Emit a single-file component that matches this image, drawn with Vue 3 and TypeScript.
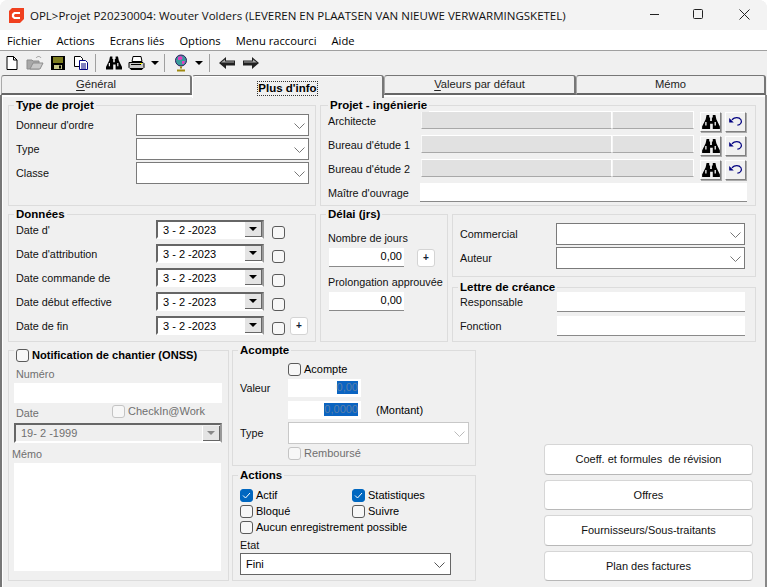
<template>
  <div class="window">
    <!-- barre de titre -->
    <div class="titlebar">
      <svg class="logo" width="17" height="17" viewBox="0 0 17 17">
        <path d="M4 1h12v11l-4 4H1V4z" fill="#f0401f" />
        <path d="M12 6H6.500L5 7.500v2L6.500 11H12" fill="none" stroke="#fff" stroke-width="2.200" />
      </svg>
      <span class="title">OPL&gt;Projet P20230004: Wouter Volders (LEVEREN EN PLAATSEN VAN NIEUWE VERWARMINGSKETEL)</span>
      <div class="win-controls">
        <svg width="46" height="30" viewBox="0 0 46 30"><path d="M21 14.500h9" stroke="#222" /></svg>
        <svg width="46" height="30" viewBox="0 0 46 30"><rect x="18.500" y="9.500" width="9" height="9" rx="1" fill="none" stroke="#222" /></svg>
        <svg width="46" height="30" viewBox="0 0 46 30"><path d="M18.500 9.500l10 10M28.500 9.500l-10 10" stroke="#222" /></svg>
      </div>
    </div>

    <div class="menubar">
      <span v-for="m in menus" :key="m">{{ m }}</span>
    </div>

    <div class="toolbar">
      <span class="tool">
        <svg width="16" height="16" viewBox="0 0 16 16"><path d="M3 1.500h6.500l3.500 3.500v9.500H3z" fill="#fff" stroke="#000" /><path d="M9.500 1.500V5H13" fill="none" stroke="#000" /></svg>
      </span>
      <span class="tool">
        <svg width="18" height="16" viewBox="0 0 18 16"><path d="M1 5h5l1 1h6v8H1z" fill="#a8a8a8" stroke="#8c8c8c" /><path d="M4 14l3-6h10l-3 6z" fill="#c8c8c8" stroke="#8c8c8c" /><path d="M10 3c1.500-2 4-2 5 0" fill="none" stroke="#9a9a9a" /></svg>
      </span>
      <span class="tool">
        <svg width="16" height="16" viewBox="0 0 16 16"><path d="M1 1h14v14H1z" fill="#000" /><path d="M3 2h10v6H3z" fill="#7d7d20" /><path d="M4 10h8v4H4z" fill="#c9c98a" /><path d="M9 10.500h2v3H9z" fill="#000" /></svg>
      </span>
      <span class="tool">
        <svg width="16" height="16" viewBox="0 0 16 16"><path d="M1.500 1.500h6l2 2v8h-8z" fill="#fff" stroke="#000" /><path d="M6.500 5.500h6l2 2v7h-8z" fill="#fff" stroke="#000080" /><path d="M8 9h5M8 11h5M8 13h5" stroke="#000080" /></svg>
      </span>
      <i class="tool-sep" />
      <span class="tool">
        <svg width="16" height="16" viewBox="0 0 20 18"><path :d="binoPath" fill="#000" fill-rule="evenodd" /></svg>
      </span>
      <span class="tool">
        <svg width="17" height="16" viewBox="0 0 17 16"><path d="M5 1.500h8l1 5H4z" fill="#fff" stroke="#000" /><path d="M1 7.500h14l1 1v4l-1 1H2l-1-1z" fill="#c8c8c8" stroke="#000" /><path d="M3 13.500h11v1H3z" fill="#fff" stroke="#000" /><path d="M3 9.500h10" stroke="#000" /><path d="M12 8h2v1h-2z" fill="#ff0" /></svg>
      </span>
      <i class="caret" />
      <i class="tool-sep sep2" />
      <span class="tool">
        <svg width="14" height="18" viewBox="0 0 14 18"><circle cx="7" cy="6.500" r="5.500" fill="#3a9c9c" stroke="#301a60" /><path d="M4 3l3-1 2 2-2 2-3 0zM8 7l3 0-1 3-2 0z" fill="#e040c0" /><path d="M7 12.500v2M3 16.500h8" stroke="#a08a10" stroke-width="2" /></svg>
      </span>
      <i class="caret caret2" />
      <i class="tool-sep sep3" />
      <span class="tool">
        <svg width="17" height="14" viewBox="0 0 17 14"><path d="M0 7l7-6v3.500h9v5H7V13z" fill="#222" /><path d="M2 6.500l4-3v2h9v1z" fill="#aaa" /></svg>
      </span>
      <span class="tool">
        <svg width="17" height="14" viewBox="0 0 17 14"><path d="M17 7l-7-6v3.500H1v5h9V13z" fill="#222" /><path d="M2 5.500h9v-2l4 3H2z" fill="#aaa" /></svg>
      </span>
    </div>

    <div class="tabs">
      <div class="tab"><span><u>G</u>énéral</span></div>
      <div class="tab active"><span class="focus">Plus d'info</span></div>
      <div class="tab"><span><u>V</u>aleurs par défaut</span></div>
      <div class="tab last"><span>Mémo</span></div>
    </div>

    <div class="page">
      <div class="top-grid">
        <section class="group type-box">
          <h4 class="legend">Type de projet</h4>
          <div class="form-rows type-rows">
            <template v-for="l in typeRows" :key="l">
              <label>{{ l }}</label>
              <div class="combo">
                <svg class="chev" width="11" height="6" viewBox="0 0 11 6"><path d="M.5.500l5 5 5-5" fill="none" stroke="#777" /></svg>
              </div>
            </template>
          </div>
        </section>

        <section class="group inge-box">
          <h4 class="legend inge-legend">Projet - ingénierie</h4>
          <div class="inge-rows">
            <template v-for="l in ingeRows" :key="l">
              <label>{{ l }}</label>
              <div class="grey-field" />
              <div class="grey-field" />
              <button class="icon-btn">
                <svg width="18" height="16" viewBox="0 0 20 18"><path :d="binoPath" fill="#000" fill-rule="evenodd" /></svg>
              </button>
              <button class="icon-btn">
                <svg width="14" height="10" viewBox="0 0 15 11"><path d="M0 1v5h5z" fill="#000080" /><path d="M3 3c3-3 8-3 10 0 1.500 3-1 6-4 6" fill="none" stroke="#000080" stroke-width="1.300" /></svg>
              </button>
            </template>
            <label>Maître d'ouvrage</label>
            <div class="flat-input owner" />
          </div>
        </section>

        <section class="group data-box">
          <h4 class="legend">Données</h4>
          <div class="data-rows">
            <template v-for="(l, i) in dateRows" :key="l">
              <label>{{ l }}</label>
              <div class="date-combo">
                <span>3 - 2 -2023</span>
                <i class="date-btn" />
              </div>
              <i class="check" />
              <button v-if="i === dateRows.length - 1" class="plus">+</button>
            </template>
          </div>
        </section>

        <section class="group delay-box">
          <h4 class="legend">Délai (jrs)</h4>
          <label class="delay-label first">Nombre de jours</label>
          <div class="delay-row">
            <div class="flat-input num">0,00</div>
            <button class="plus">+</button>
          </div>
          <label class="delay-label">Prolongation approuvée</label>
          <div class="flat-input num">0,00</div>
        </section>

        <div class="right-stack">
          <section class="group comm-box">
            <div class="form-rows comm-rows">
              <template v-for="l in commRows" :key="l">
                <label>{{ l }}</label>
                <div class="combo">
                  <svg class="chev" width="11" height="6" viewBox="0 0 11 6"><path d="M.5.500l5 5 5-5" fill="none" stroke="#777" /></svg>
                </div>
              </template>
            </div>
          </section>
          <section class="group letter-box">
            <h4 class="legend">Lettre de créance</h4>
            <div class="letter-rows">
              <label>Responsable</label>
              <div class="flat-input" />
              <label>Fonction</label>
              <div class="flat-input" />
            </div>
          </section>
        </div>
      </div>

      <div class="bottom-grid">
        <section class="group onss-box">
          <div class="legend legend-check"><i class="check" /><h4>Notification de chantier (ONSS)</h4></div>
          <label class="off num-label">Numéro</label>
          <div class="flat-input onss-input" />
          <div class="onss-date-row">
            <label class="off">Date</label>
            <div class="checkin"><i class="check disabled" /><span class="off">CheckIn@Work</span></div>
          </div>
          <div class="date-combo off-combo">
            <span>19- 2 -1999</span>
            <i class="date-btn" />
          </div>
          <label class="off memo-label">Mémo</label>
          <div class="memo" />
        </section>

        <div class="mid-col">
          <section class="group acompte-box">
            <h4 class="legend">Acompte</h4>
            <div class="acompte-rows">
              <span />
              <div class="inline-check"><i class="check" /><span>Acompte</span></div>
              <span />
              <label>Valeur</label>
              <div class="flat-input num sel-input"><mark>0,00</mark></div>
              <span />
              <span />
              <div class="flat-input num sel-input"><mark>0,0000</mark></div>
              <span class="montant">(Montant)</span>
              <label>Type</label>
              <div class="combo combo-off">
                <svg class="chev" width="11" height="6" viewBox="0 0 11 6"><path d="M.5.500l5 5 5-5" fill="none" stroke="#bbb" /></svg>
              </div>
              <span />
              <div class="inline-check rembourse"><i class="check disabled" /><span class="off">Remboursé</span></div>
            </div>
          </section>

          <section class="group actions-box">
            <h4 class="legend">Actions</h4>
            <div class="checks">
              <div v-for="c in actionChecks" :key="c.label" class="inline-check" :class="{ wide: c.wide }">
                <i class="check" :class="{ on: c.on }">
                  <svg v-if="c.on" width="9" height="7" viewBox="0 0 9 7"><path d="M1 3.500l2.500 2.500L8 1" fill="none" stroke="#fff" /></svg>
                </i>
                <span>{{ c.label }}</span>
              </div>
            </div>
            <label class="etat-label">Etat</label>
            <div class="combo etat">
              <span>Fini</span>
              <svg class="chev" width="11" height="6" viewBox="0 0 11 6"><path d="M.5.500l5 5 5-5" fill="none" stroke="#555" /></svg>
            </div>
          </section>
        </div>

        <div class="side-buttons">
          <button v-for="b in sideButtons" :key="b">{{ b }}</button>
        </div>
      </div>
    </div>
  </div>
</template>

<script setup lang="ts">
interface ActionCheck {
  label: string
  on: boolean
  wide?: boolean
}

const menus: string[] = ['Fichier', 'Actions', 'Ecrans liés', 'Options', 'Menu raccourci', 'Aide']
const typeRows: string[] = ["Donneur d'ordre", 'Type', 'Classe']
const ingeRows: string[] = ['Architecte', "Bureau d'étude 1", "Bureau d'étude 2"]
const dateRows: string[] = ["Date d'", "Date d'attribution", 'Date commande de', 'Date début effective', 'Date de fin']
const commRows: string[] = ['Commercial', 'Auteur']
const actionChecks: ActionCheck[] = [
  { label: 'Actif', on: true },
  { label: 'Statistiques', on: true },
  { label: 'Bloqué', on: false },
  { label: 'Suivre', on: false },
  { label: 'Aucun enregistrement possible', on: false, wide: true },
]
const sideButtons: string[] = ['Coeff. et formules  de révision', 'Offres', 'Fournisseurs/Sous-traitants', 'Plan des factures']

// jumelles, utilisees dans la barre d'outils et les lignes ingenierie
const binoPath =
  'M5 1h3v3h1v4h2V4h1V1h3l1 5 4 8v3h-8v-6H9v6H0v-3l4-8zM3.500 9v4h1.500V9zM14 9v4h1.500V9z'
</script>

<style>
html,
body {
  background: #fff;
}
</style>

<style scoped>
.window {
  width: 767px;
  height: 587px;
  overflow: hidden;
  background: #f0f0f0;
  border-radius: 8px 8px 0 0;
  font-family: "Liberation Sans", Arial, sans-serif;
  font-size: 11px;
  color: #000;
  box-sizing: border-box;
}

.titlebar {
  height: 30px;
  display: flex;
  align-items: center;
  background: #f3f3f3;
}
.logo {
  margin-left: 8px;
  flex: none;
}
.title {
  margin-left: 5px;
  font-family: "Open Sans", sans-serif;
  font-size: 11.5px;
  white-space: nowrap;
  color: #111;
}
.win-controls {
  margin-left: auto;
  display: flex;
  flex: none;
  height: 30px;
}
.win-controls svg {
  display: block;
}

.menubar {
  height: 20px;
  background: #fff;
  display: flex;
  align-items: center;
  gap: 15px;
  padding-left: 7px;
  font-family: "Open Sans", sans-serif;
  font-size: 11.2px;
}

.toolbar {
  height: 25px;
  border-top: 1px solid #a0a0a0;
  box-sizing: border-box;
  display: flex;
  align-items: center;
  background: #f0f0f0;
}
.tool {
  width: 23px;
  display: flex;
  justify-content: center;
  flex: none;
}
.tool svg {
  display: block;
}
.tool-sep {
  width: 1px;
  height: 18px;
  background: #a0a0a0;
  margin: 0 6px 0 3px;
  flex: none;
}
.sep2 {
  margin-left: 5px;
  margin-right: 4px;
}
.sep3 {
  margin-left: 6px;
  margin-right: 6px;
}
.caret {
  width: 0;
  height: 0;
  border: 4px solid transparent;
  border-top: 4px solid #000;
  border-bottom: none;
  margin-left: 3px;
  flex: none;
}
.caret2 {
  margin-left: 3px;
}

.tabs {
  height: 20px;
  display: flex;
  padding-left: 1px;
  position: relative;
}
.tab {
  flex: none;
  width: 192px;
  height: 20px;
  box-sizing: border-box;
  border-top: 1px solid #777;
  border-left: 1px solid #aaa;
  border-right: 2px solid #777;
  border-bottom: 2px solid #666;
  border-radius: 3px 3px 0 0;
  display: flex;
  align-items: center;
  justify-content: center;
  color: #222;
  font-size: 11.2px;
  padding-bottom: 1px;
}
.tab:first-child {
  width: 191px;
}
.tab u {
  text-underline-offset: 2px;
}
.tab.active {
  height: 23px;
  border-bottom: none;
  border-left: 1px solid #fff;
  background: #f0f0f0;
  font-weight: bold;
  font-size: 11.5px;
  color: #000;
  position: relative;
  z-index: 1;
  box-shadow: inset 0 1px 0 #fff;
}
.focus {
  outline: 1px dotted #333;
  line-height: 13px;
  margin-top: 3px;
}
.tab.last {
  width: 190px;
}

.page {
  height: 492px;
  box-sizing: border-box;
  border-left: 2px solid #777;
  border-right: 2px solid #888;
  box-shadow: inset 1px 2px 0 #fff;
  padding: 10px 9px 0 6px;
}

.top-grid {
  display: grid;
  grid-template-columns: 308px 128px 304px;
  grid-template-rows: 101px 128px;
  column-gap: 4px;
  row-gap: 8px;
}
.inge-box {
  grid-column: 2 / 4;
}

.group {
  position: relative;
  border: 1px solid #dcdcdc;
  box-sizing: border-box;
}
.legend {
  position: absolute;
  top: -8px;
  left: 5px;
  margin: 0;
  padding: 0 2px;
  background: #f0f0f0;
  font-size: 11.5px;
  font-weight: bold;
  line-height: 14px;
}
.inge-legend {
  left: 7px;
}

label {
  display: block;
  color: #111;
  font-size: 10.8px;
  white-space: nowrap;
}

.form-rows {
  display: grid;
  grid-auto-rows: 24px;
  align-items: start;
}
.form-rows label {
  line-height: 23px;
}
.type-rows {
  grid-template-columns: 120px 173px;
  padding: 8px 0 0 7px;
}
.comm-box {
  height: 63px;
}
.comm-rows {
  grid-template-columns: 96px 189px;
  padding: 8px 0 0 7px;
}

.combo {
  position: relative;
  height: 22px;
  box-sizing: border-box;
  background: #fff;
  border: 1px solid #7a7a7a;
}
.chev {
  position: absolute;
  right: 3px;
  top: 8px;
}
.combo-off {
  border-color: #c8c8c8;
}

.inge-rows {
  display: grid;
  grid-template-columns: 93px 191px 82px 27px 25px;
  grid-auto-rows: 24px;
  align-items: start;
  padding: 5px 0 0 7px;
}
.inge-rows label {
  line-height: 21px;
}
.grey-field {
  height: 18px;
  box-sizing: border-box;
  background: #e1e1e1;
  border: 1px solid #fff;
  border-bottom-color: #a8a8a8;
  border-left-color: #f7f7f7;
}
.icon-btn {
  justify-self: end;
  width: 21px;
  height: 20px;
  margin-top: 1px;
  padding: 0;
  display: flex;
  align-items: center;
  justify-content: center;
  background: #f0f0f0;
  border: 1px solid;
  border-color: #fff #808080 #808080 #fff;
  box-shadow: 1px 1px 0 #aaa;
  box-sizing: border-box;
}
.owner {
  grid-column: 2 / 6;
  margin: 0 -1px 0 -1px;
}

.flat-input {
  height: 19px;
  box-sizing: border-box;
  background: #fff;
  border-bottom: 1px solid #8a8a8a;
}
.num {
  width: 75px;
  text-align: right;
  padding-right: 2px;
  line-height: 17px;
}

.data-rows {
  display: grid;
  grid-template-columns: 140px 108px 8px 13px 5px 18px;
  grid-auto-rows: 24px;
  align-items: start;
  padding: 5px 0 0 7px;
}
.data-rows label {
  grid-column: 1;
  line-height: 20px;
}
.data-rows .check {
  grid-column: 4;
  margin-top: 6px;
}
.data-rows .date-combo {
  grid-column: 2;
}
.data-rows .plus {
  grid-column: 6;
  margin-top: 1px;
}

.date-combo {
  height: 19px;
  box-sizing: border-box;
  display: flex;
  align-items: center;
  justify-content: space-between;
  background: #fff;
  border: 2px solid;
  border-color: #666 #999 #fff #666;
  padding-left: 5px;
}
.date-btn {
  width: 17px;
  height: 15px;
  background: #e4e4e4;
  border-left: 1px solid #fff;
  box-shadow: inset -1px -1px 0 #666;
  position: relative;
  flex: none;
}
.date-btn::after {
  content: "";
  position: absolute;
  left: 4px;
  top: 5px;
  border: 4px solid transparent;
  border-top: 4px solid #000;
  border-bottom: none;
}

.check {
  display: inline-block;
  width: 13px;
  height: 13px;
  box-sizing: border-box;
  border: 1px solid #5a5a5a;
  border-radius: 3px;
  background: #f7f7f7;
  flex: none;
  position: relative;
}
.check svg {
  position: absolute;
  left: 1px;
  top: 2px;
}
.check.on {
  background: #0067c0;
  border-color: #0067c0;
}
.check.disabled {
  border-color: #c4c4c4;
}

.plus {
  width: 18px;
  height: 18px;
  padding: 0;
  font: bold 10px/14px "Liberation Sans", Arial, sans-serif;
  background: #fff;
  border: 1px solid #d4d4d4;
  border-radius: 3px;
  color: #123;
}

.delay-label {
  padding-left: 7px;
  line-height: 14px;
  margin-top: 8px;
}
.delay-label.first {
  margin-top: 16px;
}
.delay-row {
  display: flex;
  gap: 13px;
  margin-top: 3px;
  align-items: center;
}
.delay-box .flat-input {
  margin-left: 8px;
  margin-top: 3px;
}
.delay-row .flat-input {
  margin-top: 0;
}

.right-stack {
  display: flex;
  flex-direction: column;
  gap: 10px;
}
.letter-box {
  flex: 1;
}
.letter-rows {
  display: grid;
  grid-template-columns: 97px 188px;
  grid-auto-rows: 24px;
  align-items: start;
  padding: 4px 0 0 7px;
}
.letter-rows label {
  line-height: 20px;
}
.letter-rows .flat-input {
  height: 20px;
}

.bottom-grid {
  display: grid;
  grid-template-columns: 221px 244px 277px;
  column-gap: 3px;
  margin-top: 8px;
  height: 229px;
}

.off {
  color: #6f6f6f;
}
.legend-check {
  display: flex;
  align-items: center;
  gap: 3px;
  top: -3px;
  left: 5px;
  padding-right: 2px;
}
.legend-check h4 {
  margin: 0;
  font-size: 11.1px;
}
.num-label {
  padding: 16px 0 0 7px;
  line-height: 14px;
}
.onss-input {
  margin: 2px 0 0 5px;
  width: 208px;
  height: 20px;
  border-bottom: none;
}
.onss-date-row {
  display: flex;
  justify-content: space-between;
  padding: 2px 0 0 7px;
  height: 18px;
}
.onss-date-row label {
  padding-top: 2px;
}
.checkin {
  display: flex;
  gap: 3px;
  width: 116px;
  line-height: 13px;
}
.off-combo {
  width: 208px;
  height: 20px;
  margin-left: 5px;
  background: #efefef;
  color: #6f6f6f;
}
.off-combo .date-btn::after {
  border-top-color: #888;
}
.memo-label {
  padding: 4px 0 0 3px;
  line-height: 14px;
}
.memo {
  width: 207px;
  height: 108px;
  margin: 2px 0 0 5px;
  background: #fff;
}

.mid-col {
  display: flex;
  flex-direction: column;
  gap: 9px;
}
.acompte-box {
  height: 116px;
}
.acompte-rows {
  display: grid;
  grid-template-columns: 48px 73px 1fr;
  grid-template-rows: 16px 22px 21px 25px 16px;
  align-items: center;
  padding: 10px 0 0 7px;
}
.acompte-rows .combo {
  grid-column: 2 / 4;
  width: 181px;
}
.inline-check {
  display: flex;
  align-items: center;
  gap: 3px;
  white-space: nowrap;
}
.sel-input {
  width: 73px;
  height: 18px;
  background: #fff;
  color: #6f6f6f;
  border-bottom: none;
  line-height: 13px;
  padding: 2px 3px 0 0;
}
mark {
  background: #0a64c2;
  color: #5b7fa8;
  display: inline-block;
}
.montant {
  padding-left: 15px;
}
.rembourse {
  grid-column: 2 / 4;
}

.actions-box {
  flex: 1;
}
.checks {
  display: grid;
  grid-template-columns: 112px 1fr;
  grid-auto-rows: 16px;
  align-items: center;
  padding: 11px 0 0 7px;
}
.inline-check.wide {
  grid-column: 1 / 3;
}
.etat-label {
  margin: 3px 0 0 7px;
  line-height: 14px;
}
.etat {
  width: 211px;
  margin: 1px 0 0 7px;
  display: flex;
  align-items: center;
  padding-left: 5px;
  border-color: #666;
}
.etat .chev {
  right: 5px;
}

.side-buttons {
  margin-left: 65px;
  width: 209px;
  padding-top: 94px;
  display: flex;
  flex-direction: column;
  gap: 5px;
}
.side-buttons button {
  height: 30.5px;
  flex: none;
  background: #fff;
  border: 1px solid #d6d6d6;
  border-bottom-color: #b8b8b8;
  border-radius: 4px;
  font: 11px "Liberation Sans", Arial, sans-serif;
  white-space: pre;
  color: #111;
}
</style>
